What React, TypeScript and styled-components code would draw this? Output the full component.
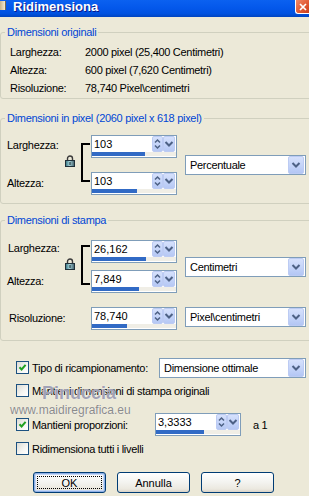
import React from 'react';
import styled, { createGlobalStyle } from 'styled-components';

const GlobalStyle = createGlobalStyle`
  html, body {
    margin: 0;
    padding: 0;
  }
  body {
    width: 309px;
    height: 496px;
    overflow: hidden;
    background: #ece9d8;
    font-family: "Liberation Sans", Arial, sans-serif;
    font-size: 11px;
    letter-spacing: -0.3px;
    color: #000;
  }
`;

const Dialog = styled.div`
  position: relative;
  width: 309px;
  height: 496px;
  overflow: hidden;
  background: #ece9d8;
`;

const TitleBar = styled.div`
  height: 17px;
  display: flex;
  align-items: flex-start;
  background: linear-gradient(#0b61f0 0%, #0458eb 45%, #0052e0 80%, #0044bf 100%);
`;

const AppIcon = styled.div`
  width: 5px;
  height: 9px;
  margin-top: 1px;
  background: linear-gradient(90deg, #c9b48a, #f3ead2);
  border-right: 1px solid #7a6a4a;
`;

const TitleText = styled.div`
  margin-left: 7px;
  color: #fff;
  font-weight: bold;
  font-size: 13px;
  line-height: 14px;
  letter-spacing: 0;
  text-shadow: 1px 1px #0a1a8a;
`;

const CloseButton = styled.div`
  margin-left: auto;
  width: 14px;
  height: 14px;
  box-sizing: border-box;
  border-left: 1px solid #fff;
  border-bottom: 1px solid #fff;
  border-bottom-left-radius: 3px;
  background: linear-gradient(135deg, #f08a6a, #e25a34 55%, #c63c1a);
  display: flex;
  align-items: center;
  justify-content: center;
`;

const Content = styled.div`
  padding-top: 8px;
`;

const Group = styled.fieldset<{ $mt: number; $pt: number; $pb: number }>`
  margin: ${p => p.$mt}px 0 0 0;
  width: 330px;
  box-sizing: border-box;
  border: 1px solid #d0d0bf;
  border-radius: 3px;
  padding: ${p => p.$pt}px 0 ${p => p.$pb}px 0;
  min-width: 0;
`;

const Legend = styled.legend`
  margin-left: 4px;
  padding: 0 2px;
  color: #0046d5;
  line-height: 14px;
`;

const InfoGrid = styled.div`
  display: grid;
  grid-template-columns: 75px auto;
  grid-auto-rows: 18px;
  align-items: center;
  padding-left: 9px;
`;

const LinkGrid = styled.div<{ $gap: number }>`
  display: grid;
  grid-template-columns: 55px 19px 10px 86px 129px;
  grid-template-rows: 23px 23px;
  row-gap: ${p => p.$gap}px;
  padding-left: 6px;
`;

const FieldLabel = styled.div<{ $dy: number; $dx?: number }>`
  grid-column: 1;
  align-self: start;
  line-height: 14px;
  padding-top: ${p => p.$dy}px;
  padding-left: ${p => p.$dx ?? 0}px;
  white-space: nowrap;
`;

const LockCell = styled.div<{ $top: number }>`
  grid-column: 2;
  grid-row: 1 / 3;
  align-self: start;
  margin: ${p => p.$top}px 0 0 3px;
  display: flex;
`;

const Bracket = styled.div<{ $top: number; $h: number }>`
  grid-column: 3;
  grid-row: 1 / 3;
  align-self: start;
  margin-top: ${p => p.$top}px;
  width: 9px;
  height: ${p => p.$h}px;
  box-sizing: border-box;
  border: 2px solid #000;
  border-right: none;
`;

const SpinCell = styled.div<{ $row: number }>`
  grid-column: 4;
  grid-row: ${p => p.$row};
`;

const ComboCell = styled.div<{ $align: string }>`
  grid-column: 5;
  grid-row: 1 / 3;
  align-self: ${p => p.$align};
  margin-left: 8px;
`;

const ResRow = styled.div`
  display: grid;
  grid-template-columns: 84px 86px 129px;
  height: 23px;
  margin-top: 14px;
  padding-left: 6px;
`;

const SpinBox = styled.div`
  width: 86px;
  height: 23px;
  box-sizing: border-box;
  border: 1px solid #7f9db9;
  background: #fff;
  display: flex;
  flex-direction: column;
`;

const SpinTop = styled.div`
  display: flex;
  height: 16px;
`;

const SpinText = styled.div`
  flex: 1;
  padding-left: 2px;
  line-height: 16px;
  font-size: 11px;
  letter-spacing: 0;
`;

const SpinBtn = styled.div<{ $w: number }>`
  width: ${p => p.$w}px;
  height: 16px;
  box-sizing: border-box;
  border: 1px solid #bccbf3;
  border-radius: 2px;
  background: linear-gradient(#d6e1fc, #c2d2f8 60%, #b6c8f4);
  display: flex;
  align-items: center;
  justify-content: center;
`;

const SpinBtns = styled.div`
  display: flex;
  margin-right: 1px;
`;

const BarTrack = styled.div`
  height: 4px;
  margin-bottom: 1px;
  background: #f0eee6;
  display: flex;
`;

const BarFill = styled.div`
  height: 100%;
  background: #316ac5;
`;

const ComboBox = styled.div<{ $w: number }>`
  width: ${p => p.$w}px;
  height: 20px;
  box-sizing: border-box;
  border: 1px solid #7f9db9;
  background: #fff;
  display: flex;
  align-items: center;
`;

const ComboText = styled.div`
  flex: 1;
  padding-left: 4px;
  line-height: 18px;
  white-space: nowrap;
`;

const ComboBtn = styled.div`
  width: 16px;
  height: 18px;
  margin-right: 1px;
  box-sizing: border-box;
  border: 1px solid #bccbf3;
  border-radius: 2px;
  background: linear-gradient(#d6e1fc, #c2d2f8 60%, #b3c6f4);
  display: flex;
  align-items: center;
  justify-content: center;
`;

const Options = styled.div`
  margin-top: 16px;
  width: 306px;
  display: flex;
  flex-direction: column;
`;

const OptionRow = styled.div<{ $h: number; $mt: number }>`
  display: flex;
  align-items: center;
  height: ${p => p.$h}px;
  margin-top: ${p => p.$mt}px;
  padding-left: 16px;
`;

const CheckBox = styled.div`
  width: 13px;
  height: 13px;
  box-sizing: border-box;
  border: 1px solid #1c5180;
  background: linear-gradient(135deg, #dcdcd5, #f6f6f3 60%, #fff);
  display: flex;
  align-items: center;
  justify-content: center;
  margin-right: 3px;
  flex-shrink: 0;
`;

const OptionLabel = styled.div<{ $w?: number }>`
  white-space: nowrap;
  line-height: 14px;
  width: ${p => (p.$w ? `${p.$w}px` : 'auto')};
`;

const Suffix = styled.div`
  margin-left: 12px;
`;

const ComboRight = styled.div`
  margin-left: auto;
`;

const Watermark = styled.div`
  position: absolute;
  left: 42px;
  top: 383px;
  font-size: 18px;
  font-weight: bold;
  letter-spacing: 0;
  color: rgba(145, 145, 168, 0.85);
  text-shadow: 0 0 1px #fff;
  pointer-events: none;
`;

const WatermarkUrl = styled.div`
  position: absolute;
  left: 10px;
  top: 403px;
  font-size: 12px;
  letter-spacing: 0;
  color: #8a8a8a;
  text-shadow: 0 0 1px #fff;
  pointer-events: none;
`;

const ButtonRow = styled.div`
  display: flex;
  gap: 11px;
  margin-top: 17px;
  padding-left: 33px;
`;

const PushButton = styled.div<{ $default?: boolean }>`
  position: relative;
  width: 73px;
  height: 21px;
  box-sizing: border-box;
  border: 1px solid #003c74;
  border-radius: 3px;
  background: linear-gradient(#ffffff, #f3f3ef 50%, #ebe8df 85%, #d8d2c6);
  box-shadow: ${p => (p.$default ? 'inset 0 0 0 1px #8fb0e6, inset 0 0 0 2px #c4d6f5' : 'none')};
  display: flex;
  align-items: center;
  justify-content: center;
  letter-spacing: 0;
`;

const FocusRing = styled.div`
  position: absolute;
  inset: 3px;
  border: 1px dotted #000;
`;

const Lock = () => (
  <svg width="10" height="12" viewBox="0 0 10 12">
    <defs>
      <linearGradient id="lockBody" x1="0" y1="0" x2="1" y2="0">
        <stop offset="0" stopColor="#2f6f7c" />
        <stop offset="0.45" stopColor="#a6d4da" />
        <stop offset="1" stopColor="#3d5a66" />
      </linearGradient>
    </defs>
    <path d="M2.5 5.5V3.5a2.5 2.5 0 0 1 5 0v2" stroke="#3a3a3a" strokeWidth="1.4" fill="none" />
    <rect x="0.5" y="5.5" width="9" height="6" fill="url(#lockBody)" stroke="#1f2f38" />
    <rect x="4.5" y="7" width="1" height="3" fill="#10222a" />
  </svg>
);

const UpDownIcon = () => (
  <svg width="9" height="14" viewBox="0 0 9 14">
    <path d="M2 5.5L4.5 3L7 5.5" stroke="#4d6185" strokeWidth="1.5" fill="none" />
    <path d="M2 8.5L4.5 11L7 8.5" stroke="#4d6185" strokeWidth="1.5" fill="none" />
  </svg>
);

const ChevronIcon = () => (
  <svg width="10" height="8" viewBox="0 0 10 8">
    <path d="M1.5 2L5 5.5L8.5 2" stroke="#4d6185" strokeWidth="2" fill="none" />
  </svg>
);

const CheckIcon = () => (
  <svg width="9" height="9" viewBox="0 0 9 9">
    <path d="M1.5 4.2L3.6 6.4L7.6 1.8" stroke="#21a121" strokeWidth="2" fill="none" />
  </svg>
);

const CloseIcon = () => (
  <svg width="8" height="8" viewBox="0 0 8 8">
    <path d="M1 1L7 7M7 1L1 7" stroke="#fff" strokeWidth="1.7" />
  </svg>
);

const Spin: React.FC<{ value: string; fill: number }> = ({ value, fill }) => (
  <SpinBox>
    <SpinTop>
      <SpinText>{value}</SpinText>
      <SpinBtns>
        <SpinBtn $w={11}>
          <UpDownIcon />
        </SpinBtn>
        <SpinBtn $w={12}>
          <ChevronIcon />
        </SpinBtn>
      </SpinBtns>
    </SpinTop>
    <BarTrack>
      <BarFill style={{ width: fill }} />
    </BarTrack>
  </SpinBox>
);

const Combo: React.FC<{ text: string; width: number }> = ({ text, width }) => (
  <ComboBox $w={width}>
    <ComboText>{text}</ComboText>
    <ComboBtn>
      <ChevronIcon />
    </ComboBtn>
  </ComboBox>
);

const Check: React.FC<{ checked?: boolean }> = ({ checked }) => (
  <CheckBox>{checked && <CheckIcon />}</CheckBox>
);

export default function App() {
  return (
    <Dialog>
      <GlobalStyle />
      <TitleBar>
        <AppIcon />
        <TitleText>Ridimensiona</TitleText>
        <CloseButton>
          <CloseIcon />
        </CloseButton>
      </TitleBar>
      <Content>
        <Group $mt={0} $pt={4} $pb={1}>
          <Legend>Dimensioni originali</Legend>
          <InfoGrid>
            <div>Larghezza:</div>
            <div>2000 pixel (25,400 Centimetri)</div>
            <div>Altezza:</div>
            <div>600 pixel (7,620 Centimetri)</div>
            <div>Risoluzione:</div>
            <div>78,740 Pixel\centimetri</div>
          </InfoGrid>
        </Group>

        <Group $mt={12} $pt={10} $pb={8}>
          <Legend>Dimensioni in pixel (2060 pixel x 618 pixel)</Legend>
          <LinkGrid $gap={14}>
            <FieldLabel $dy={3} style={{ gridRow: 1 }}>Larghezza:</FieldLabel>
            <FieldLabel $dy={4} style={{ gridRow: 2 }}>Altezza:</FieldLabel>
            <LockCell $top={20}>
              <Lock />
            </LockCell>
            <Bracket $top={8} $h={39} />
            <SpinCell $row={1}>
              <Spin value="103" fill={53} />
            </SpinCell>
            <SpinCell $row={2}>
              <Spin value="103" fill={45} />
            </SpinCell>
            <ComboCell $align="center">
              <Combo text="Percentuale" width={121} />
            </ComboCell>
          </LinkGrid>
        </Group>

        <Group $mt={9} $pt={13} $pb={10}>
          <Legend>Dimensioni di stampa</Legend>
          <LinkGrid $gap={7}>
            <FieldLabel $dy={1} $dx={1} style={{ gridRow: 1 }}>Larghezza:</FieldLabel>
            <FieldLabel $dy={4} style={{ gridRow: 2 }}>Altezza:</FieldLabel>
            <LockCell $top={18}>
              <Lock />
            </LockCell>
            <Bracket $top={5} $h={40} />
            <SpinCell $row={1}>
              <Spin value="26,162" fill={54} />
            </SpinCell>
            <SpinCell $row={2}>
              <Spin value="7,849" fill={47} />
            </SpinCell>
            <ComboCell $align="center">
              <Combo text="Centimetri" width={121} />
            </ComboCell>
          </LinkGrid>
          <ResRow>
            <FieldLabel $dy={4} $dx={2}>Risoluzione:</FieldLabel>
            <div>
              <Spin value="78,740" fill={35} />
            </div>
            <ComboCell $align="start" style={{ gridColumn: 3, gridRow: 1 }}>
              <Combo text="Pixel\centimetri" width={121} />
            </ComboCell>
          </ResRow>
        </Group>

        <Options>
          <OptionRow $h={21} $mt={0}>
            <Check checked />
            <OptionLabel>Tipo di ricampionamento:</OptionLabel>
            <ComboRight>
              <Combo text="Dimensione ottimale" width={147} />
            </ComboRight>
          </OptionRow>
          <OptionRow $h={13} $mt={6}>
            <Check />
            <OptionLabel>Mantieni dimensioni di stampa originali</OptionLabel>
          </OptionRow>
          <OptionRow $h={23} $mt={16}>
            <Check checked />
            <OptionLabel $w={123}>Mantieni proporzioni:</OptionLabel>
            <Spin value="3,3333" fill={48} />
            <Suffix>a 1</Suffix>
          </OptionRow>
          <OptionRow $h={13} $mt={6}>
            <Check />
            <OptionLabel>Ridimensiona tutti i livelli</OptionLabel>
          </OptionRow>
        </Options>

        <ButtonRow>
          <PushButton $default>
            <FocusRing />
            OK
          </PushButton>
          <PushButton>Annulla</PushButton>
          <PushButton>?</PushButton>
        </ButtonRow>
      </Content>

      <Watermark>Pinuccia</Watermark>
      <WatermarkUrl>www.maidiregrafica.eu</WatermarkUrl>
    </Dialog>
  );
}
